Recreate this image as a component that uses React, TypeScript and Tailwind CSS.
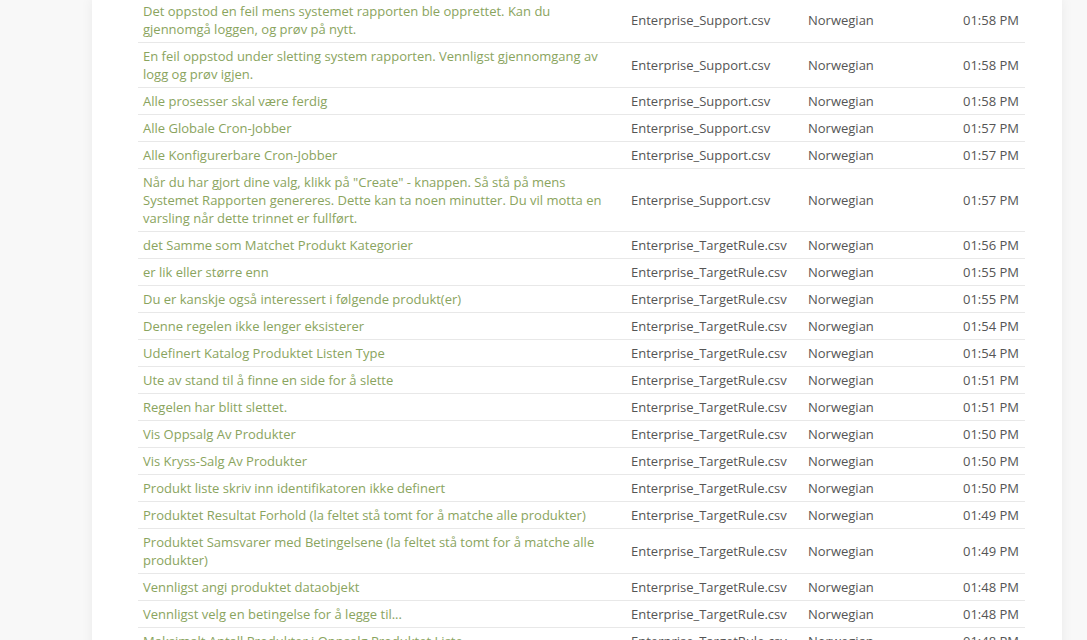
import { FC } from 'react';

interface Row { text: string; file: string; time: string; }

const S = 'Enterprise_Support.csv';
const T = 'Enterprise_TargetRule.csv';

const rows: Row[] = [
  { text: 'Det oppstod en feil mens systemet rapporten ble opprettet. Kan du gjennomgå loggen, og prøv på nytt.', file: S, time: '01:58 PM' },
  { text: 'En feil oppstod under sletting system rapporten. Vennligst gjennomgang av logg og prøv igjen.', file: S, time: '01:58 PM' },
  { text: 'Alle prosesser skal være ferdig', file: S, time: '01:58 PM' },
  { text: 'Alle Globale Cron-Jobber', file: S, time: '01:57 PM' },
  { text: 'Alle Konfigurerbare Cron-Jobber', file: S, time: '01:57 PM' },
  { text: 'Når du har gjort dine valg, klikk på "Create" - knappen. Så stå på mens Systemet Rapporten genereres. Dette kan ta noen minutter. Du vil motta en varsling når dette trinnet er fullført.', file: S, time: '01:57 PM' },
  { text: 'det Samme som Matchet Produkt Kategorier', file: T, time: '01:56 PM' },
  { text: 'er lik eller større enn', file: T, time: '01:55 PM' },
  { text: 'Du er kanskje også interessert i følgende produkt(er)', file: T, time: '01:55 PM' },
  { text: 'Denne regelen ikke lenger eksisterer', file: T, time: '01:54 PM' },
  { text: 'Udefinert Katalog Produktet Listen Type', file: T, time: '01:54 PM' },
  { text: 'Ute av stand til å finne en side for å slette', file: T, time: '01:51 PM' },
  { text: 'Regelen har blitt slettet.', file: T, time: '01:51 PM' },
  { text: 'Vis Oppsalg Av Produkter', file: T, time: '01:50 PM' },
  { text: 'Vis Kryss-Salg Av Produkter', file: T, time: '01:50 PM' },
  { text: 'Produkt liste skriv inn identifikatoren ikke definert', file: T, time: '01:50 PM' },
  { text: 'Produktet Resultat Forhold (la feltet stå tomt for å matche alle produkter)', file: T, time: '01:49 PM' },
  { text: 'Produktet Samsvarer med Betingelsene (la feltet stå tomt for å matche alle produkter)', file: T, time: '01:49 PM' },
  { text: 'Vennligst angi produktet dataobjekt', file: T, time: '01:48 PM' },
  { text: 'Vennligst velg en betingelse for å legge til...', file: T, time: '01:48 PM' },
  { text: 'Maksimalt Antall Produkter i Oppsalg Produktet Liste', file: T, time: '01:48 PM' },
];

const TranslationRow: FC<{ row: Row }> = ({ row }) => (
  <div className="flex border-b border-[#e8e8e8]">
    <div className="w-[488px] shrink-0 py-1 pl-[5px] pr-[20px] text-[#8aa45e]">{row.text}</div>
    <div className="w-[177px] shrink-0 py-1 pl-[5px] flex items-center">{row.file}</div>
    <div className="flex-1 py-1 pl-[5px] flex items-center">Norwegian</div>
    <div className="w-[120px] shrink-0 py-1 pr-[6px] flex items-center justify-end">{row.time}</div>
  </div>
);

export default function App() {
  return (
    <div className="h-[640px] overflow-hidden bg-[#f8f8f8] font-['Open_Sans',sans-serif] text-[13px] leading-[18px] text-[#555]">
      <div className="ml-[92px] w-[970px] min-h-[700px] bg-white shadow-[0_0_12px_rgba(0,0,0,0.06)] pl-[46px] pr-[37px]">
        <div className="-mt-[2px]">
          {rows.map((r, i) => (
            <TranslationRow key={i} row={r} />
          ))}
        </div>
      </div>
    </div>
  );
}
